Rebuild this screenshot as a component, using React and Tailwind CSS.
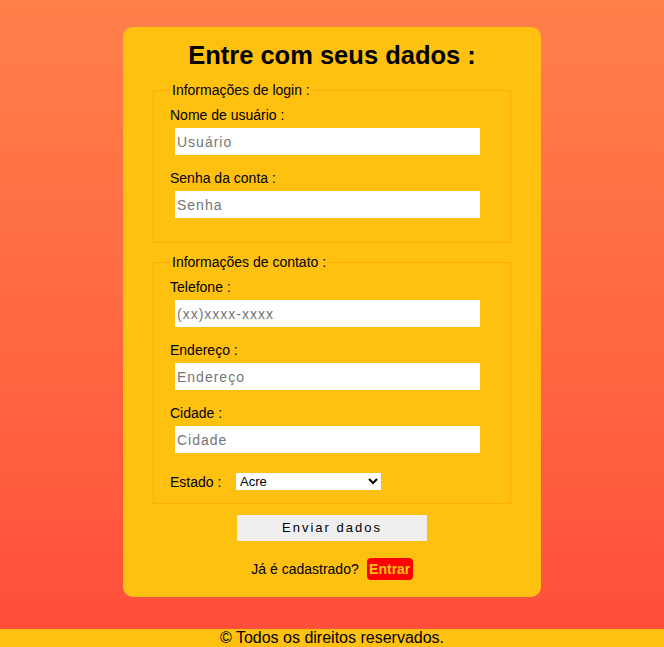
const FONT = { fontFamily: '"Liberation Sans", Arial, sans-serif' }

function Field({ label, placeholder, first }) {
  return (
    <div className={first ? 'mt-[9px]' : 'mt-[15px]'}>
      <label className="block text-[14px] leading-4 text-black">{label}</label>
      <input
        placeholder={placeholder}
        className="block mt-[5px] ml-[5px] w-[305px] h-[27px] bg-white px-[2px] text-[14px] tracking-[1px] text-black placeholder:text-[#757575] outline-none"
      />
    </div>
  )
}

function Box({ legend, children, className = '' }) {
  return (
    <fieldset className={`border border-[#ffad0a] px-4 ${className}`}>
      <legend className="px-[2px] text-[14px] leading-4 text-black">{legend}</legend>
      {children}
    </fieldset>
  )
}

export default function App() {
  return (
    <div className="min-h-screen flex flex-col bg-gradient-to-b from-[#ff7f49] to-[#ff4d3b]" style={FONT}>
      <main className="pt-[27px] flex justify-center">
        <div className="w-[418px] bg-[#ffc10f] rounded-[10px] px-[30px] pt-[14px] pb-[17px]">
          <h1 className="text-center text-[25.5px] leading-7 font-bold text-black">Entre com seus dados :</h1>

          <Box legend="Informações de login :" className="mt-[13px] pb-[24px]">
            <Field label="Nome de usuário :" placeholder="Usuário" first />
            <Field label="Senha da conta :" placeholder="Senha" />
          </Box>

          <Box legend="Informações de contato :" className="mt-[11px] pb-[13px]">
            <Field label="Telefone :" placeholder="(xx)xxxx-xxxx" first />
            <Field label="Endereço :" placeholder="Endereço" />
            <Field label="Cidade :" placeholder="Cidade" />
            <div className="mt-[20px] flex items-center">
              <span className="text-[14px] leading-4 text-black w-[66px]">Estado :</span>
              <select className="w-[145px] h-[17px] bg-white text-[13px] text-black outline-none">
                <option>Acre</option>
                <option>Alagoas</option>
                <option>Amapá</option>
                <option>Amazonas</option>
                <option>Bahia</option>
              </select>
            </div>
          </Box>

          <div className="mt-[11px] flex justify-center">
            <button className="w-[190px] h-[26px] bg-[#efefef] text-[13px] tracking-[2px] text-black">
              Enviar dados
            </button>
          </div>

          <div className="mt-[17px] flex items-center justify-center gap-2">
            <span className="text-[14px] text-black">Já é cadastrado?</span>
            <button className="w-[46px] h-[22px] rounded bg-[#ff0000] text-[14px] font-bold text-[#ffc10f]">
              Entrar
            </button>
          </div>
        </div>
      </main>

      <footer className="mt-auto h-[18px] bg-[#ffc10f] text-center text-[16px] leading-[18px] text-black">
        © Todos os direitos reservados.
      </footer>
    </div>
  )
}
